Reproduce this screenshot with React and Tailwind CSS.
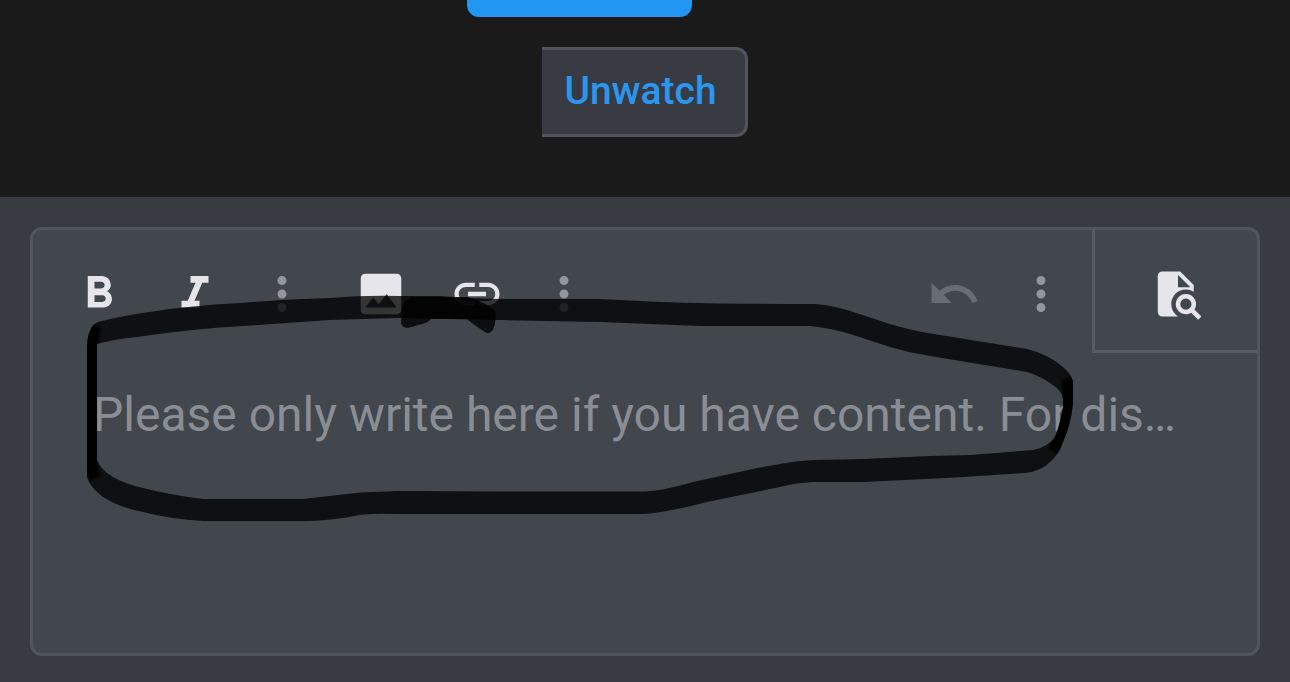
import React from "react";

const paths = {
  bold: "M15.6 10.79c.97-.67 1.65-1.77 1.65-2.79 0-2.26-1.75-4-4-4H7v14h7.04c2.09 0 3.71-1.7 3.71-3.79 0-1.52-.86-2.82-2.15-3.42zM10 6.5h3c.83 0 1.5.67 1.5 1.5s-.67 1.5-1.5 1.5h-3v-3zm3.5 9H10v-3h3.5c.83 0 1.5.67 1.5 1.5s-.67 1.5-1.5 1.5z",
  italic: "M10 4v3h2.21l-3.42 8H6v3h8v-3h-2.21l3.42-8H18V4z",
  image:
    "M21 19V5c0-1.1-.9-2-2-2H5c-1.1 0-2 .9-2 2v14c0 1.1.9 2 2 2h14c1.1 0 2-.9 2-2zM8.5 13.5l2.5 3.01L14.5 12l4.5 6H5l3.5-4.5z",
  link: "M3.9 12c0-1.71 1.39-3.1 3.1-3.1h4V7H7c-2.76 0-5 2.24-5 5s2.24 5 5 5h4v-1.9H7c-1.71 0-3.1-1.39-3.1-3.1zM8 13h8v-2H8v2zm9-6h-4v1.9h4c1.71 0 3.1 1.39 3.1 3.1s-1.39 3.1-3.1 3.1h-4V17h4c2.76 0 5-2.24 5-5s-2.24-5-5-5z",
  undo: "M12.5 8c-2.65 0-5.05.99-6.9 2.6L2 7v9h9l-3.62-3.62c1.39-1.16 3.16-1.88 5.12-1.88 3.54 0 6.55 2.31 7.6 5.5l2.37-.78C21.08 11.03 17.15 8 12.5 8z",
  more: "M12 8c1.1 0 2-.9 2-2s-.9-2-2-2-2 .9-2 2 .9 2 2 2zm0 2c-1.1 0-2 .9-2 2s.9 2 2 2 2-.9 2-2-.9-2-2-2zm0 6c-1.1 0-2 .9-2 2s.9 2 2 2 2-.9 2-2-.9-2-2-2z",
  preview:
    "M5 2h8l6 6v3.02A6.5 6.5 0 1 0 12.04 22H5a2 2 0 0 1-2-2V4a2 2 0 0 1 2-2zM12 3.5V9h5.5zM15.5 12a4.5 4.5 0 0 1 3.81 6.9L22.39 22 21 23.39l-3.12-3.07A4.5 4.5 0 1 1 15.5 12zm0 2a2.5 2.5 0 1 0 0 5 2.5 2.5 0 0 0 0-5z",
};

function Icon({ name }) {
  return (
    <svg viewBox="0 0 24 24" className="size-[54px]" fill="currentColor" fillRule="evenodd" aria-hidden="true">
      <path d={paths[name]} />
    </svg>
  );
}

function Tool({ icon, label, disabled }) {
  return (
    <button
      type="button"
      aria-label={label}
      disabled={disabled}
      className="flex w-24 justify-center text-[#e5e5ea] disabled:text-[#6a6c75]"
    >
      <Icon name={icon} />
    </button>
  );
}

function More({ label }) {
  return (
    <button type="button" aria-label={label} className="flex w-[78px] justify-center text-[#95959e]">
      <Icon name="more" />
    </button>
  );
}

function Scribble() {
  return (
    <svg viewBox="0 0 1290 682" className="pointer-events-none absolute top-0 left-0 w-full" aria-hidden="true">
      <defs>
        <filter id="soft" x="-5%" y="-5%" width="110%" height="110%">
          <feGaussianBlur stdDeviation="0.7" />
        </filter>
        <filter id="softer" filterUnits="userSpaceOnUse" x="0" y="0" width="1290" height="682">
          <feGaussianBlur stdDeviation="1.6" />
        </filter>
        <clipPath id="ring">
          <path
            clipRule="evenodd"
            d="M87 348C87 335 91 324 98 322Q125 315 153 311.500Q195 305 240 303Q285 299 330 298Q365 295 400 296H440Q470 299 500 299H600L660 302Q720 304 815 304Q830 305 847 310L890 324Q912 331 940 335L1027 349Q1048 354 1063 367Q1073 375 1073 384V403Q1071 425 1063 442Q1058 456 1050 462Q1042 471 1025 473L947 478L863 482H813Q795 483 780 487L707 502Q665 513 643 514H397Q375 513 360 515Q330 521 303 521H203Q170 519 143 512Q118 507 103 497Q87 485 87 474Z
             M97 344Q115 339 137 337Q190 329 243 326L330 320L397 318L600 322L700 326H810Q830 328 850 334L890 347Q910 353 930 356L1027 372Q1040 376 1050 383Q1063 391 1063 399V407Q1060 425 1055 437Q1048 447 1033 450L970 455L930 456L863 459L813 460Q795 461 780 464L757 468L693 482Q662 491 643 491.500H507L397 491L360 492.500L303 499H203Q170 495 143 488Q125 484 113 477Q101 470 97 460Z"
          />
        </clipPath>
      </defs>
      <g filter="url(#soft)">
        <path
          fillRule="evenodd"
          fill="#000"
          fillOpacity="0.77"
          d="M87 348C87 335 91 324 98 322Q125 315 153 311.500Q195 305 240 303Q285 299 330 298Q365 295 400 296H440Q470 299 500 299H600L660 302Q720 304 815 304Q830 305 847 310L890 324Q912 331 940 335L1027 349Q1048 354 1063 367Q1073 375 1073 384V403Q1071 425 1063 442Q1058 456 1050 462Q1042 471 1025 473L947 478L863 482H813Q795 483 780 487L707 502Q665 513 643 514H397Q375 513 360 515Q330 521 303 521H203Q170 519 143 512Q118 507 103 497Q87 485 87 474Z
             M97 344Q115 339 137 337Q190 329 243 326L330 320L397 318L600 322L700 326H810Q830 328 850 334L890 347Q910 353 930 356L1027 372Q1040 376 1050 383Q1063 391 1063 399V407Q1060 425 1055 437Q1048 447 1033 450L970 455L930 456L863 459L813 460Q795 461 780 464L757 468L693 482Q662 491 643 491.500H507L397 491L360 492.500L303 499H203Q170 495 143 488Q125 484 113 477Q101 470 97 460Z"
        />
        <g clipPath="url(#ring)">
          <g filter="url(#softer)" fill="none" stroke="#000" strokeOpacity="0.95">
            <path strokeWidth="12" d="M96 326Q92 336 92 348V466Q92 472 95 479" />
            <path strokeWidth="12" d="M1067 378Q1069 384 1068 404Q1064 430 1054 452" />
          </g>
        </g>
        <path
          fill="#000"
          fillOpacity="0.8"
          d="M402 307Q405 299 412 297H468Q489 304 495 311Q497 320 493 330Q489 335 485 332Q474 325 467 319H431Q428 323 422 324L408 328Q402 328 401 323Z"
        />
      </g>
    </svg>
  );
}

export default function App() {
  return (
    <div className="relative min-h-screen overflow-hidden bg-[#393b43] font-['Roboto',sans-serif]">
      <section className="flex flex-col items-center bg-[#1a1a1a] pb-[60px]">
        <div className="flex w-[356px]">
          <button type="button" aria-label="Reply" className="h-[17px] w-[225px] rounded-b-xl bg-[#2196f3]" />
        </div>
        <button
          type="button"
          className="mt-[30px] h-[90px] rounded-r-xl border-y-3 border-r-3 border-[#53545b] bg-[#393b43] pr-7 pb-[2px] pl-[22px] text-[39px] leading-[48px] font-medium text-[#2b96f0]"
        >
          Unwatch
        </button>
      </section>

      <form className="px-[30px] pt-[30px] pb-[26px]">
        <div className="rounded-xl border-3 border-[#53555e] bg-[#42464d]">
          <div className="flex h-[123px] items-stretch">
            <div className="flex flex-1 items-start gap-3 pt-[37px] pr-3 pl-[18px]">
              <div className="flex">
                <Tool icon="bold" label="Bold" />
                <Tool icon="italic" label="Italic" />
                <More label="More text options" />
              </div>
              <div className="flex">
                <Tool icon="image" label="Insert image" />
                <Tool icon="link" label="Insert link" />
                <More label="More insert options" />
              </div>
              <div className="ml-auto flex">
                <Tool icon="undo" label="Undo" disabled />
                <More label="More options" />
              </div>
            </div>
            <button
              type="button"
              aria-label="Preview"
              className="flex w-[165px] items-start justify-center border-b-3 border-l-3 border-[#595b64] pt-[37px] pl-1 text-[#e5e5ea]"
            >
              <Icon name="preview" />
            </button>
          </div>
          <textarea
            aria-label="Message"
            placeholder="Please only write here if you have content. For dis…"
            className="block h-[300px] w-full resize-none overflow-hidden bg-transparent px-[60px] pt-8 text-[48px] leading-[60px] whitespace-nowrap text-[#e5e5ea] outline-none placeholder:text-[#8b8d94] placeholder:opacity-100"
          />
        </div>
      </form>
      <Scribble />
    </div>
  );
}
